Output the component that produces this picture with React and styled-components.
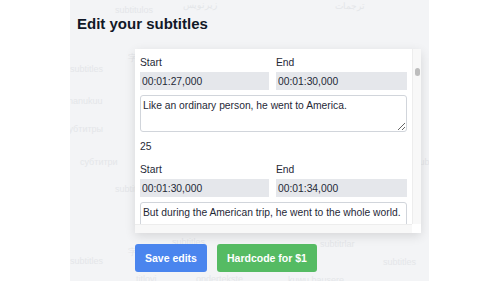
import React, { useLayoutEffect, useRef } from "react";
import styled, { createGlobalStyle } from "styled-components";

const GlobalStyle = createGlobalStyle`
  html, body {
    margin: 0;
    padding: 0;
    background: #ffffff;
    font-family: "Liberation Sans", Arial, sans-serif;
    color: #1f2937;
  }
`;

const Page = styled.div`
  display: flex;
  padding-left: 70px;
  height: 281px;
`;

const Panel = styled.main`
  position: relative;
  width: 359px;
  height: 281px;
  background: #f3f4f6;
  overflow: hidden;
  padding: 15px 0 0 7px;
  box-sizing: border-box;
`;

const Watermark = styled.span`
  position: absolute;
  font-size: 9px;
  color: #e4e6e9;
  white-space: nowrap;
  pointer-events: none;
`;

const Title = styled.h1`
  position: relative;
  margin: 0;
  font-size: 15px;
  line-height: 18px;
  font-weight: 700;
  color: #111827;
`;

const Card = styled.div`
  position: relative;
  margin: 16px 0 0 58px;
  width: 286px;
  height: 184px;
  display: flex;
  flex-direction: column;
  background: #ffffff;
  box-shadow: 0 3px 10px rgba(0, 0, 0, 0.12);
`;

const CardBody = styled.div`
  display: flex;
  flex: 1;
  min-height: 0;
`;

const Scroller = styled.div`
  flex: 1;
  overflow: hidden;
  padding: 0 5px;
`;

const Track = styled.div`
  width: 9px;
  box-sizing: border-box;
  background: #f8f8f8;
  border-left: 1px solid #ededed;
  display: flex;
  justify-content: center;
`;

const Thumb = styled.div`
  width: 5px;
  height: 8px;
  margin-top: 19px;
  border-radius: 3px;
  background: #bdbdbd;
`;

const BottomBar = styled.div`
  height: 9px;
  display: flex;
`;

const BottomTrack = styled.div`
  flex: 1;
  background: #f8f8f8;
  border-top: 1px solid #ededed;
`;

const Corner = styled.div`
  width: 9px;
  background: #ffffff;
`;

const Item = styled.div`
  padding-bottom: 8px;
`;

const Number = styled.div`
  font-size: 10.3px;
  line-height: 14px;
  margin-bottom: 9px;
`;

const Fields = styled.div`
  display: grid;
  grid-template-columns: 129px 131px;
  column-gap: 7px;
`;

const Label = styled.label`
  display: flex;
  flex-direction: column;
  font-size: 10.3px;
  line-height: 14px;
  gap: 2px;
`;

const TimeInput = styled.input`
  height: 18px;
  box-sizing: border-box;
  border: none;
  background: #e5e7eb;
  padding: 0 2px;
  font-family: inherit;
  font-size: 10.3px;
  color: #1f2937;
  outline: none;
`;

const TextBox = styled.textarea`
  display: block;
  margin-top: 5px;
  width: 267px;
  height: 37px;
  box-sizing: border-box;
  border: 1px solid #d1d5db;
  border-radius: 3px;
  padding: 3px 2px;
  font-family: inherit;
  font-size: 10.3px;
  line-height: 14px;
  color: #1f2937;
  resize: vertical;
  outline: none;
  overflow: hidden;
`;

const Actions = styled.div`
  position: relative;
  display: flex;
  gap: 10px;
  margin: 11px 0 0 58px;
`;

const Button = styled.button`
  height: 28px;
  padding: 0 10px;
  border: none;
  border-radius: 3px;
  background: ${p => (p.green ? "#55bb63" : "#4a85ee")};
  color: #ffffff;
  font-family: inherit;
  font-size: 10.5px;
  font-weight: 700;
  cursor: pointer;
`;

const marks = [
  { t: "subtitulos", x: 45, y: 5 },
  { t: "زیرنویس", x: 113, y: 0 },
  { t: "ترجمات", x: 265, y: 1 },
  { t: "subtitles", x: 0, y: 64 },
  { t: "hananukuu", x: -12, y: 96 },
  { t: "субтитры", x: -6, y: 124 },
  { t: "субтитри", x: 10, y: 157 },
  { t: "subtitles", x: 45, y: 184 },
  { t: "字幕", x: 58, y: 52 },
  { t: "字幕", x: 58, y: 246 },
  { t: "subtitles", x: 0, y: 256 },
  { t: "subtitles", x: 102, y: 237 },
  { t: "subtitrlar", x: 250, y: 239 },
  { t: "subtitles", x: 313, y: 257 },
  { t: "ondertekste", x: 126, y: 274 },
  { t: "titlovi", x: 66, y: 274 },
  { t: "kuwu bausere", x: 218, y: 275 },
  { t: "subtítulos", x: 345, y: 157 }
];

const pad = n => String(n).padStart(2, "0");
const fmt = s => `00:${pad(Math.floor(s / 60))}:${pad(s % 60)},000`;

const texts = {
  24: "Like an ordinary person, he went to America.",
  25: "But during the American trip, he went to the whole world."
};

const items = Array.from({ length: 30 }, (_, i) => {
  const n = i + 1;
  let start = n * 3 + 15;
  let end = start + 3;
  if (n === 24) {
    start = 87;
    end = 90;
  }
  if (n === 25) {
    start = 90;
    end = 94;
  }
  if (n > 25) {
    start = 94 + (n - 26) * 4;
    end = start + 4;
  }
  return { n, start, end, text: texts[n] || "And then he came back home again." };
});

const App = () => {
  const scrollRef = useRef(null);
  const targetRef = useRef(null);

  useLayoutEffect(() => {
    if (scrollRef.current && targetRef.current) {
      scrollRef.current.scrollTop =
        targetRef.current.offsetTop - scrollRef.current.offsetTop - 7;
    }
  }, []);

  return (
    <Page>
      <GlobalStyle />
      <Panel>
        {marks.map((m, i) => (
          <Watermark key={i} style={{ left: m.x, top: m.y }}>
            {m.t}
          </Watermark>
        ))}
        <Title>Edit your subtitles</Title>
        <Card>
          <CardBody>
            <Scroller ref={scrollRef}>
              {items.map(item => (
                <Item key={item.n}>
                  <Number>{item.n}</Number>
                  <Fields ref={item.n === 24 ? targetRef : null}>
                    <Label>
                      Start
                      <TimeInput defaultValue={fmt(item.start)} />
                    </Label>
                    <Label>
                      End
                      <TimeInput defaultValue={fmt(item.end)} />
                    </Label>
                  </Fields>
                  <TextBox defaultValue={item.text} />
                </Item>
              ))}
            </Scroller>
            <Track>
              <Thumb />
            </Track>
          </CardBody>
          <BottomBar>
            <BottomTrack />
            <Corner />
          </BottomBar>
        </Card>
        <Actions>
          <Button>Save edits</Button>
          <Button green>Hardcode for $1</Button>
        </Actions>
      </Panel>
    </Page>
  );
};

export default App;
